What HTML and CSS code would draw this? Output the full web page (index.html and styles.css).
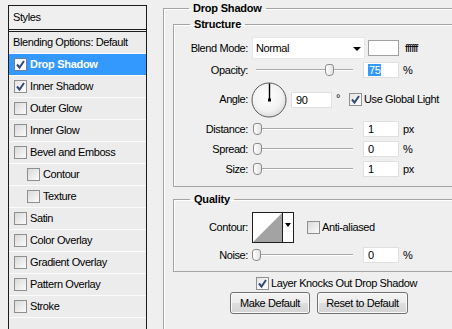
FILE: index.html
```html
<!DOCTYPE html>
<html>
<head>
<meta charset="utf-8">
<title>Layer Style</title>
<link rel="stylesheet" href="styles.css">
</head>
<body>
<div class="window">
  <div class="styles-panel">
    <div class="styles-head">Styles</div>
    <ul class="style-list">
      <li class="row plain">Blending Options: Default</li>
      <li class="row selected"><span class="cb on"><svg viewBox="0 0 11 11" width="11" height="11"><path d="M2 5.5 L4.5 8.5 L9 2" fill="none" stroke="#34497a" stroke-width="2"/></svg></span>Drop Shadow</li>
      <li class="row"><span class="cb on"><svg viewBox="0 0 11 11" width="11" height="11"><path d="M2 5.5 L4.5 8.5 L9 2" fill="none" stroke="#34497a" stroke-width="2"/></svg></span>Inner Shadow</li>
      <li class="row"><span class="cb"></span>Outer Glow</li>
      <li class="row"><span class="cb"></span>Inner Glow</li>
      <li class="row"><span class="cb"></span>Bevel and Emboss</li>
      <li class="row sub"><span class="cb"></span>Contour</li>
      <li class="row sub"><span class="cb"></span>Texture</li>
      <li class="row"><span class="cb"></span>Satin</li>
      <li class="row"><span class="cb"></span>Color Overlay</li>
      <li class="row"><span class="cb"></span>Gradient Overlay</li>
      <li class="row"><span class="cb"></span>Pattern Overlay</li>
      <li class="row"><span class="cb"></span>Stroke</li>
      <li class="row empty"></li>
    </ul>
  </div>

  <div class="settings">
    <fieldset class="group outer">
      <legend>Drop Shadow</legend>

      <fieldset class="group inner structure">
        <legend>Structure</legend>
        <div class="frow blend">
          <span class="lbl">Blend Mode:</span>
          <div class="select"><span class="sel-text">Normal</span><span class="arrow"></span></div>
          <span class="swatch"></span>
          <span class="hex">ffffff</span>
        </div>
        <div class="frow field">
          <span class="lbl">Opacity:</span>
          <div class="slider"><span class="track"></span><span class="thumb" style="left:73px"></span></div>
          <span class="num"><span class="selected-text">75</span></span>
          <span class="unit">%</span>
        </div>
        <div class="frow angle">
          <span class="lbl">Angle:</span>
          <svg class="dial" viewBox="0 0 36 36" width="36" height="36">
            <defs>
              <radialGradient id="dialfill" cx="45%" cy="40%" r="60%">
                <stop offset="0" stop-color="#ffffff"/>
                <stop offset="0.7" stop-color="#f2f2f2"/>
                <stop offset="1" stop-color="#dddddd"/>
              </radialGradient>
            </defs>
            <circle cx="18" cy="18" r="17" fill="url(#dialfill)" stroke="#5a5a5a" stroke-width="1"/>
            <line x1="18.5" y1="18" x2="18.5" y2="1.5" stroke="#000" stroke-width="1.4"/>
            <rect x="17" y="16.5" width="3" height="3" fill="#000"/>
          </svg>
          <span class="num angle-num">90</span>
          <span class="deg">°</span>
          <span class="cb on global"><svg viewBox="0 0 11 11" width="11" height="11"><path d="M2 5.5 L4.5 8.5 L9 2" fill="none" stroke="#34497a" stroke-width="2"/></svg></span>
          <span class="cb-text">Use Global Light</span>
        </div>
        <div class="frow field gap4">
          <span class="lbl">Distance:</span>
          <div class="slider"><span class="track"></span><span class="thumb" style="left:1px"></span></div>
          <span class="num">1</span>
          <span class="unit">px</span>
        </div>
        <div class="frow field gap4">
          <span class="lbl">Spread:</span>
          <div class="slider"><span class="track"></span><span class="thumb" style="left:1px"></span></div>
          <span class="num">0</span>
          <span class="unit">%</span>
        </div>
        <div class="frow field gap4">
          <span class="lbl">Size:</span>
          <div class="slider"><span class="track"></span><span class="thumb" style="left:1px"></span></div>
          <span class="num">1</span>
          <span class="unit">px</span>
        </div>
      </fieldset>

      <fieldset class="group inner quality">
        <legend>Quality</legend>
        <div class="frow contour-row">
          <span class="lbl">Contour:</span>
          <div class="contour">
            <svg class="curve" viewBox="0 0 29 29" width="29" height="29"><rect width="29" height="29" fill="#fff"/><polygon points="0,29 29,0 29,29" fill="#a3a3a3"/></svg>
            <span class="contour-drop"><span class="arrow small"></span></span>
          </div>
          <span class="cb anti"></span>
          <span class="cb-text">Anti-aliased</span>
        </div>
        <div class="frow field gap4">
          <span class="lbl">Noise:</span>
          <div class="slider"><span class="track"></span><span class="thumb" style="left:0px"></span></div>
          <span class="num">0</span>
          <span class="unit">%</span>
        </div>
      </fieldset>

      <div class="knockout">
        <span class="cb on"><svg viewBox="0 0 11 11" width="11" height="11"><path d="M2 5.5 L4.5 8.5 L9 2" fill="none" stroke="#34497a" stroke-width="2"/></svg></span>
        <span class="cb-text">Layer Knocks Out Drop Shadow</span>
      </div>
      <div class="buttons">
        <button class="btn make">Make Default</button>
        <button class="btn reset">Reset to Default</button>
      </div>
    </fieldset>
  </div>
</div>
</body>
</html>
```

FILE: styles.css
```css
html, body {
  margin: 0;
  padding: 0;
}
body {
  font-family: "Liberation Sans", Arial, sans-serif;
  font-size: 11px;
  letter-spacing: -0.4px;
  color: #000;
  background: #efefef;
}
.window {
  display: flex;
  align-items: flex-start;
  width: 452px;
  height: 329px;
  overflow: hidden;
  background: #efefef;
}

/* ---------- Styles list ---------- */
.styles-panel {
  flex: none;
  width: 139px;
  margin-left: 8px;
  margin-top: 5px;
  box-sizing: border-box;
  border: 1px solid #1c1c1c;
  border-bottom: none;
  height: 340px;
}
.styles-head {
  height: 22px;
  line-height: 22px;
  padding-bottom: 1px;
  padding-left: 4px;
  border-bottom: 3px double #1c1c1c;
}
.style-list {
  list-style: none;
  margin: 0;
  padding: 0;
}
.row {
  display: flex;
  align-items: center;
  height: 20px;
  padding-bottom: 1px;
  border-bottom: 1px solid #fbfbfb;
  padding-left: 5px;
  background: #ececec;
  white-space: nowrap;
}
.row .cb {
  margin-right: 3px;
  margin-top: 1px;
}
.row.plain {
  padding-left: 4px;
}
.row.sub {
  padding-left: 18px;
}
.row.selected {
  background: #3399ff;
  color: #fff;
  font-weight: bold;
  letter-spacing: -0.3px;
}
.row.selected .cb {
  background: #fff;
  border-color: #6d7fa3;
}
.row.empty {
  height: 40px;
  border-bottom: none;
}

/* ---------- Checkbox ---------- */
.cb {
  flex: none;
  display: inline-flex;
  align-items: center;
  justify-content: center;
  width: 13px;
  height: 13px;
  box-sizing: border-box;
  border: 1px solid #8e8f8f;
  background: linear-gradient(135deg, #d9d9d9 0%, #ececec 55%, #fbfbfb 100%);
}
.cb.on {
  background: linear-gradient(135deg, #e4e4e4 0%, #f6f6f6 60%, #ffffff 100%);
}
.cb svg {
  display: block;
}

/* ---------- Fieldsets ---------- */
.settings {
  flex: none;
  margin-left: 16px;
  padding-top: 1px;
}
fieldset.group {
  margin: 0;
  min-width: 0;
  border: 1px solid #a4a4a4;
  box-shadow: inset 1px 1px 0 #ffffff;
}
fieldset.group > legend {
  margin-left: 16px;
  padding: 0 4px;
  font-weight: bold;
  letter-spacing: -0.2px;
  line-height: 14px;
}
.outer {
  width: 330px;
  box-sizing: border-box;
  padding: 2px 9px 40px 9px;
}
.inner {
  padding: 6px 0 9px 0;
}
.quality {
  margin-top: 5px !important;
  padding-bottom: 8px;
}

/* ---------- Form rows ---------- */
.frow {
  display: flex;
  align-items: center;
  white-space: nowrap;
}
.lbl {
  flex: none;
  width: 74px;
  margin-right: 4px;
  text-align: right;
  padding-bottom: 1px;
}
.blend {
  height: 22px;
}
.field {
  height: 16px;
  margin-top: 3px;
}
.field.gap4 {
  margin-top: 4px;
}
.angle {
  height: 35px;
  margin-top: 4px;
}

.select {
  position: relative;
  flex: none;
  width: 113px;
  height: 22px;
  box-sizing: border-box;
  background: #fff;
  border: 1px solid #e8e8e8;
  display: flex;
  align-items: center;
  padding-left: 3px;
}
.arrow {
  position: absolute;
  right: 3px;
  top: 9px;
  width: 0;
  height: 0;
  border-left: 4px solid transparent;
  border-right: 4px solid transparent;
  border-top: 4px solid #000;
}
.swatch {
  flex: none;
  width: 31px;
  height: 16px;
  box-sizing: border-box;
  margin-left: 3px;
  background: #fff;
  border: 1px solid #a0a0a0;
}
.hex {
  margin-left: 6px;
  letter-spacing: -0.8px;
}

.slider {
  position: relative;
  flex: none;
  width: 104px;
  height: 16px;
}
.track {
  position: absolute;
  left: 4px;
  right: 3px;
  top: 7px;
  height: 1px;
  background: #a9a9a9;
  box-shadow: 0 1px 0 #ffffff;
}
.thumb {
  position: absolute;
  top: 2px;
  width: 9px;
  height: 12px;
  box-sizing: border-box;
  border: 1px solid #8c8c8c;
  border-radius: 3px 3px 4px 4px;
  background: linear-gradient(90deg, #ffffff, #e2e2e2);
}

.num {
  flex: none;
  width: 36px;
  height: 16px;
  box-sizing: border-box;
  margin-left: 7px;
  padding-left: 4px;
  background: #fff;
  border: 1px solid #e0e0e0;
  line-height: 14px;
}
.selected-text {
  display: inline-block;
  background: #3399ff;
  color: #fff;
  line-height: 12px;
  padding: 0 1px 0 1px;
}
.unit {
  margin-left: 4px;
  padding-bottom: 1px;
}

.dial {
  flex: none;
  display: block;
  margin-left: -1px;
}
.angle-num {
  width: 41px;
  margin-left: 4px;
}
.deg {
  margin-left: 4px;
  width: 5px;
  padding-bottom: 4px;
}
.global {
  margin-left: 8px;
}
.cb-text {
  margin-left: 2px;
  padding-bottom: 1px;
}

/* ---------- Quality ---------- */
.contour-row {
  height: 31px;
}
.contour {
  flex: none;
  display: flex;
  height: 31px;
  box-sizing: border-box;
  border: 1px solid #1f1f1f;
  background: #fff;
}
.curve {
  display: block;
}
.contour-drop {
  position: relative;
  width: 10px;
  border-left: 1px solid #1f1f1f;
}
.arrow.small {
  right: 2px;
  top: 10px;
  border-left-width: 3px;
  border-right-width: 3px;
  border-top-width: 4px;
}
.anti {
  margin-left: 13px;
}

/* ---------- Bottom ---------- */
.knockout {
  display: flex;
  align-items: center;
  height: 16px;
  margin-top: 3px;
  padding-left: 83px;
  white-space: nowrap;
}
.buttons {
  display: flex;
  margin-top: 1px;
  padding-left: 57px;
}
.btn {
  font-family: "Liberation Sans", Arial, sans-serif;
  font-size: 11px;
  letter-spacing: -0.4px;
  color: #000;
  height: 22px;
  box-sizing: border-box;
  padding: 0 0 1px 0;
  border: 1px solid #707070;
  border-radius: 3px;
  background: linear-gradient(#f4f4f4 0%, #ececec 48%, #dedede 52%, #d4d4d4 100%);
  box-shadow: inset 0 0 0 1px #fbfbfb;
}
.btn.make {
  width: 80px;
}
.btn.reset {
  width: 91px;
  margin-left: 7px;
}
```
